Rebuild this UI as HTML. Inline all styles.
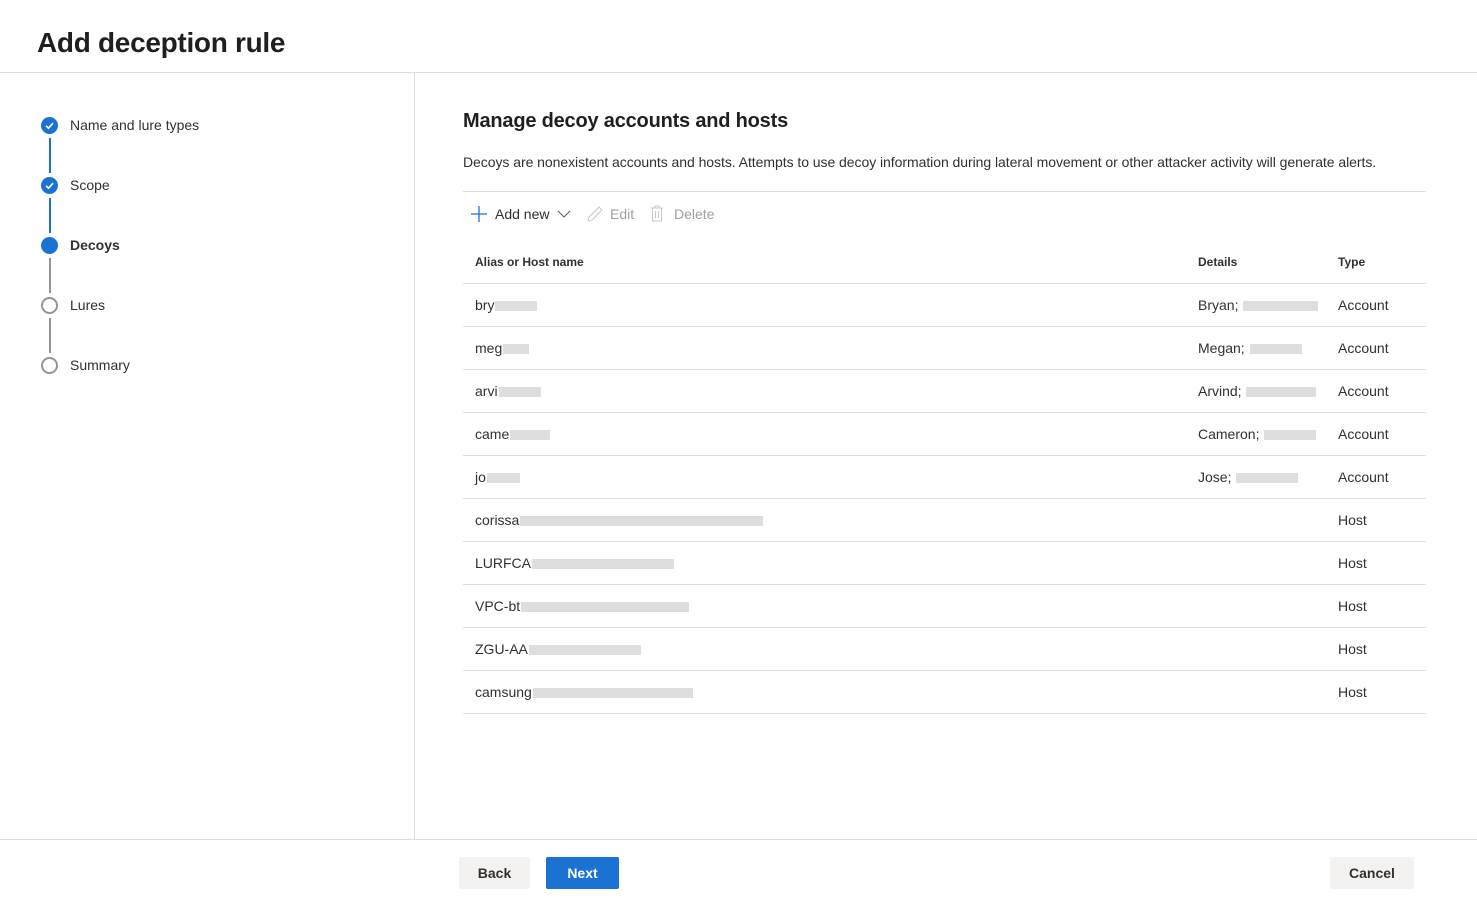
<!DOCTYPE html><html><head><style>
body{margin:0;width:1477px;height:901px;font-family:"Segoe UI","Liberation Sans",sans-serif;color:#323130;background:#fff;position:relative;overflow:hidden}
.a{position:absolute}
h1{position:absolute;left:37px;top:27px;margin:0;font-size:28px;font-weight:600;color:#201f1e;letter-spacing:-0.3px}
.step{position:absolute;left:70px;font-size:14px;white-space:nowrap}
.dot{position:absolute;left:41px;width:17px;height:17px;border-radius:50%;box-sizing:border-box}
.line{position:absolute;left:49px;width:2px;height:35px}
.blur{display:inline-block;height:10px;background:#d6d6d6;vertical-align:middle;margin-left:1px;opacity:.8}
.row{position:absolute;left:463px;width:963px;height:42px;border-bottom:1px solid #e1dfdd;font-size:14px}
.row span{position:absolute;top:13px;white-space:nowrap}
.btn{position:absolute;top:857px;height:32px;font-size:14px;font-weight:600;text-align:center;line-height:32px;border-radius:2px}
</style></head><body>
<h1>Add deception rule</h1>
<div class="a" style="left:0;top:72px;width:1477px;height:1px;background:#e1dfdd"></div>
<div class="a" style="left:414px;top:72px;width:1px;height:767px;background:#e1dfdd"></div>
<div class="a" style="left:0;top:839px;width:1477px;height:1px;background:#e1dfdd"></div>

<div class="dot" style="top:117px;background:#1a73d2"></div><svg class="a" style="left:41px;top:117px" width="17" height="17"><path d="M5 8.8l2.5 2.4 4.5-5" stroke="#fff" stroke-width="1.6" fill="none"/></svg>
<div class="line" style="top:138px;background:#1a73d2"></div>
<div class="dot" style="top:177px;background:#1a73d2"></div><svg class="a" style="left:41px;top:177px" width="17" height="17"><path d="M5 8.8l2.5 2.4 4.5-5" stroke="#fff" stroke-width="1.6" fill="none"/></svg>
<div class="line" style="top:198px;background:#1a73d2"></div>
<div class="dot" style="top:237px;background:#1a73d2"></div>
<div class="line" style="top:258px;background:#979593"></div>
<div class="dot" style="top:297px;border:2px solid #979593"></div>
<div class="line" style="top:318px;background:#979593"></div>
<div class="dot" style="top:357px;border:2px solid #979593"></div>
<div class="step" style="top:117px">Name and lure types</div>
<div class="step" style="top:177px">Scope</div>
<div class="step" style="top:237px;font-weight:700">Decoys</div>
<div class="step" style="top:297px">Lures</div>
<div class="step" style="top:357px">Summary</div>

<div class="a" style="left:463px;top:110px;font-size:20px;font-weight:600;color:#201f1e;letter-spacing:-0.2px">Manage decoy accounts and hosts</div>
<div class="a" style="left:463px;top:154px;font-size:14px;letter-spacing:-0.05px">Decoys are nonexistent accounts and hosts. Attempts to use decoy information during lateral movement or other attacker activity will generate alerts.</div>
<div class="a" style="left:463px;top:191px;width:963px;height:1px;background:#e1dfdd"></div>
<svg class="a" style="left:471px;top:206px" width="16" height="16"><path d="M8 0v16M0 8h16" stroke="#1a73d2" stroke-width="1.3"/></svg>
<div class="a" style="left:495px;top:206px;font-size:14px">Add new</div>
<svg class="a" style="left:557px;top:209px" width="14" height="10"><path d="M1 2l6 6 6-6" stroke="#605e5c" fill="none"/></svg>
<svg class="a" style="left:586px;top:205px" width="18" height="18"><path d="M2 16l1-4L13 2l3 3L6 15z" stroke="#c8c6c4" fill="none"/></svg>
<div class="a" style="left:610px;top:206px;font-size:14px;color:#a19f9d">Edit</div>
<svg class="a" style="left:650px;top:205px" width="14" height="17"><path d="M1 3h12M5 3V1h4v2M2.5 3v13h9V3M5.5 6v7M8.5 6v7" stroke="#c8c6c4" fill="none"/></svg>
<div class="a" style="left:674px;top:206px;font-size:14px;color:#a19f9d">Delete</div>

<div class="a" style="left:475px;top:255px;font-size:12px;font-weight:600">Alias or Host name</div>
<div class="a" style="left:1198px;top:255px;font-size:12px;font-weight:600">Details</div>
<div class="a" style="left:1338px;top:255px;font-size:12px;font-weight:600">Type</div>
<div class="a" style="left:463px;top:283px;width:963px;height:1px;background:#e1dfdd"></div>

<div class="row" style="top:284px"><span style="left:12px">bry<i class="blur" style="width:42px"></i></span><span style="left:735px">Bryan; <i class="blur" style="width:75px"></i></span><span style="left:875px">Account</span></div>
<div class="row" style="top:327px"><span style="left:12px">meg<i class="blur" style="width:26px"></i></span><span style="left:735px">Megan; <i class="blur" style="width:52px"></i></span><span style="left:875px">Account</span></div>
<div class="row" style="top:370px"><span style="left:12px">arvi<i class="blur" style="width:42px"></i></span><span style="left:735px">Arvind; <i class="blur" style="width:70px"></i></span><span style="left:875px">Account</span></div>
<div class="row" style="top:413px"><span style="left:12px">came<i class="blur" style="width:40px"></i></span><span style="left:735px">Cameron; <i class="blur" style="width:52px"></i></span><span style="left:875px">Account</span></div>
<div class="row" style="top:456px"><span style="left:12px">jo<i class="blur" style="width:33px"></i></span><span style="left:735px">Jose; <i class="blur" style="width:62px"></i></span><span style="left:875px">Account</span></div>
<div class="row" style="top:499px"><span style="left:12px">corissa<i class="blur" style="width:243px"></i></span><span style="left:875px">Host</span></div>
<div class="row" style="top:542px"><span style="left:12px">LURFCA<i class="blur" style="width:142px"></i></span><span style="left:875px">Host</span></div>
<div class="row" style="top:585px"><span style="left:12px">VPC-bt<i class="blur" style="width:168px"></i></span><span style="left:875px">Host</span></div>
<div class="row" style="top:628px"><span style="left:12px">ZGU-AA<i class="blur" style="width:112px"></i></span><span style="left:875px">Host</span></div>
<div class="row" style="top:671px"><span style="left:12px">camsung<i class="blur" style="width:160px"></i></span><span style="left:875px">Host</span></div>

<div class="btn" style="left:459px;width:71px;background:#f3f2f1">Back</div>
<div class="btn" style="left:546px;width:73px;background:#1a73d2;color:#fff">Next</div>
<div class="btn" style="left:1330px;width:84px;background:#f3f2f1">Cancel</div>
</body></html>
